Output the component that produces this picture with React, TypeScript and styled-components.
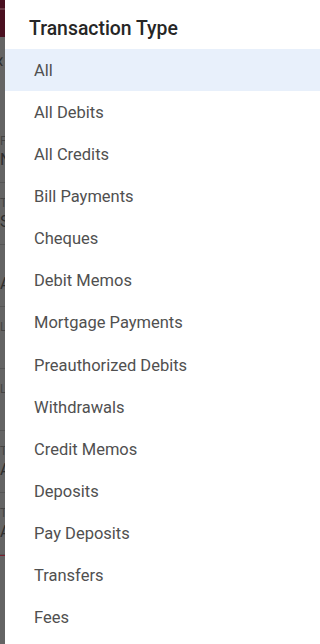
import React from "react";
import styled, { createGlobalStyle } from "styled-components";

const transactionTypes = [
  "All",
  "All Debits",
  "All Credits",
  "Bill Payments",
  "Cheques",
  "Debit Memos",
  "Mortgage Payments",
  "Preauthorized Debits",
  "Withdrawals",
  "Credit Memos",
  "Deposits",
  "Pay Deposits",
  "Transfers",
  "Fees",
];

// what peeks out from the page underneath the drawer
const backdropRows = [
  { top: "F", bottom: "N" },
  { top: "T", bottom: "S" },
  { top: "", bottom: "A" },
  { top: "L", bottom: "" },
  { top: "L", bottom: "" },
  { top: "T", bottom: "A" },
  { top: "T", bottom: "A" },
];

const GlobalStyle = createGlobalStyle`
  html, body {
    margin: 0;
    padding: 0;
    background: #646464;
  }
  body {
    font-family: Roboto, "Noto Sans", sans-serif;
  }
`;

const App: React.FC = () => {
  const selected = "All";

  return (
    <>
      <GlobalStyle />
      <Screen>
        <Backdrop>
          <BackdropHeader />
          <BackdropChevron>‹</BackdropChevron>
          <BackdropList>
            {backdropRows.map((row, i) => (
              <BackdropRow key={i}>
                <BackdropLabel>{row.top}</BackdropLabel>
                <BackdropValue>{row.bottom}</BackdropValue>
              </BackdropRow>
            ))}
          </BackdropList>
          <BackdropAccent />
        </Backdrop>
        <Drawer>
          <Title>Transaction Type</Title>
          <List>
            {transactionTypes.map((type) => (
              <Item key={type} $active={type === selected}>
                {type}
              </Item>
            ))}
          </List>
        </Drawer>
      </Screen>
    </>
  );
};

export default App;

const Screen = styled.div`
  display: flex;
  width: 100%;
  height: 100vh;
  min-height: 644px;
  overflow: hidden;
`;

const Backdrop = styled.div`
  width: 5px;
  flex-shrink: 0;
  overflow: hidden;
  background: #646464;
  display: flex;
  flex-direction: column;
  position: relative;
`;

const BackdropHeader = styled.div`
  height: 37px;
  background: #4a1020;
  border-top: 8px solid #4a1020;
  box-sizing: border-box;
  box-shadow: inset 0 9px 0 -7px #6b3a45;
`;

const BackdropChevron = styled.div`
  position: absolute;
  top: 50px;
  left: -3px;
  font-size: 22px;
  line-height: 1;
  color: #2e2e2e;
`;

const BackdropList = styled.div`
  margin-top: 84px;
  display: flex;
  flex-direction: column;
`;

const BackdropRow = styled.div`
  height: 62px;
  padding-top: 12px;
  box-sizing: border-box;
  border-bottom: 1px solid #555;
  font-size: 16px;
  line-height: 22px;
  color: #2e2e2e;
  white-space: nowrap;
`;

const BackdropLabel = styled.div`
  font-size: 12px;
  line-height: 16px;
  color: #444;
  height: 16px;
`;

const BackdropValue = styled.div`
  height: 22px;
`;

const BackdropAccent = styled.div`
  height: 1px;
  background: #7a2030;
`;

const Drawer = styled.div`
  flex: 1;
  background: #ffffff;
  display: flex;
  flex-direction: column;
  box-shadow: -1px 0 2px rgba(0, 0, 0, 0.2);
`;

const Title = styled.div`
  height: 49px;
  box-sizing: border-box;
  padding: 8px 0 0 24px;
  display: flex;
  align-items: center;
  font-size: 19.4px;
  font-weight: 500;
  color: #262626;
`;

const List = styled.div`
  display: flex;
  flex-direction: column;
`;

const Item = styled.div<{ $active?: boolean }>`
  height: 42.15px;
  flex-shrink: 0;
  padding-left: 29px;
  display: flex;
  align-items: center;
  font-size: 16.5px;
  color: #505050;
  background: ${(p) => (p.$active ? "#e8f0fb" : "transparent")};
`;
